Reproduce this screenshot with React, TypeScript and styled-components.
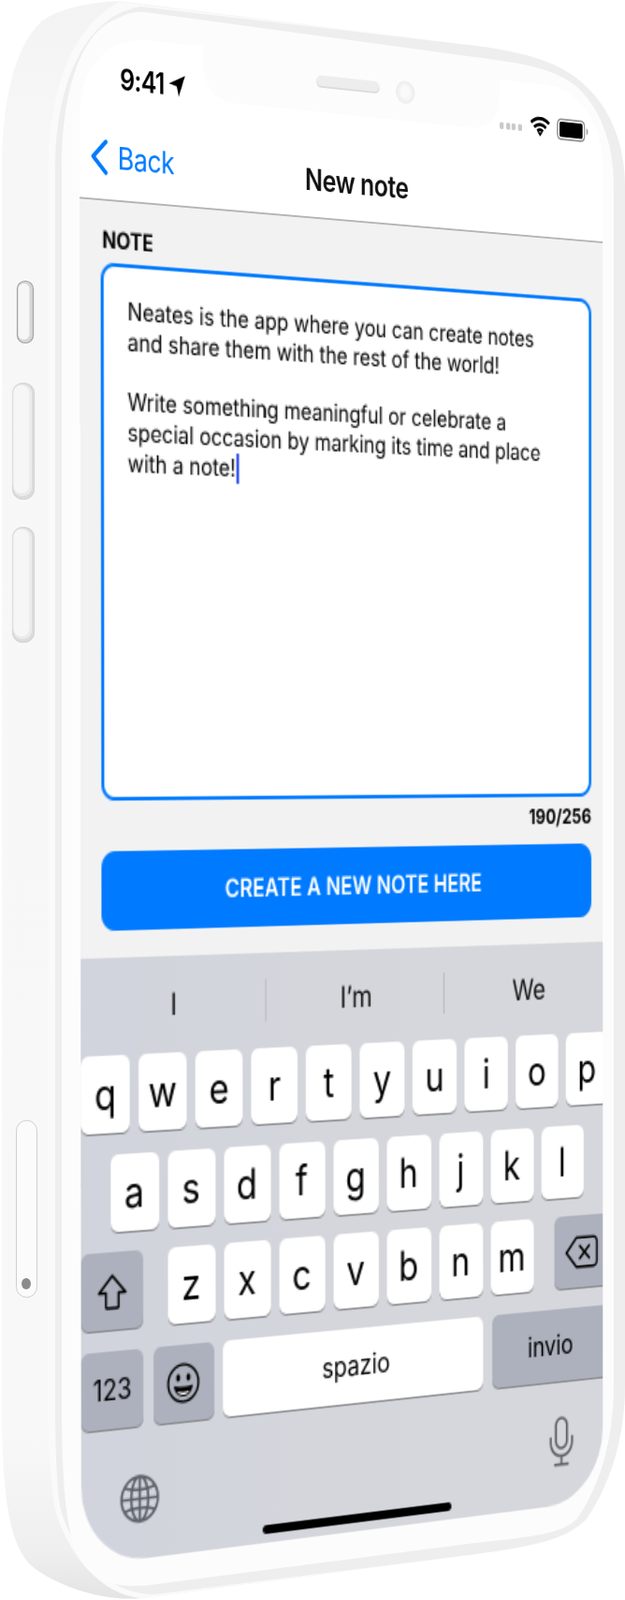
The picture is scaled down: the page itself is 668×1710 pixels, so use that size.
import styled, { createGlobalStyle } from 'styled-components';

type Point = [number, number];

const SCREEN_W = 379.5;
const SCREEN_H = 844;

// square-to-quad homography, gives the tilt of the flat screen in the picture
function quadMatrix(w: number, h: number, [p0, p1, p2, p3]: Point[]) {
  const dx1 = p1[0] - p2[0];
  const dx2 = p3[0] - p2[0];
  const sx = p0[0] - p1[0] + p2[0] - p3[0];
  const dy1 = p1[1] - p2[1];
  const dy2 = p3[1] - p2[1];
  const sy = p0[1] - p1[1] + p2[1] - p3[1];
  const den = dx1 * dy2 - dx2 * dy1;
  const g = (sx * dy2 - dx2 * sy) / den;
  const k = (dx1 * sy - sx * dy1) / den;
  const a = p1[0] - p0[0] + g * p1[0];
  const b = p3[0] - p0[0] + k * p3[0];
  const d = p1[1] - p0[1] + g * p1[1];
  const e = p3[1] - p0[1] + k * p3[1];
  const m = [a / w, d / w, 0, g / w, b / h, e / h, 0, k / h, 0, 0, 1, 0, p0[0], p0[1], 0, 1];
  return `matrix3d(${m.map((n) => n.toFixed(8)).join(',')})`;
}

const screenTilt = quadMatrix(SCREEN_W, SCREEN_H, [
  [85, 35],
  [643.5, 97],
  [643.5, 1603],
  [87, 1674],
]);

const GlobalStyle = createGlobalStyle`
  html, body {
    margin: 0;
    padding: 0;
    background: #fff;
  }
  body {
    font-family: Inter, "Liberation Sans", sans-serif;
    color: #000;
  }
`;

const Stage = styled.div`
  position: relative;
  width: 668px;
  height: 1710px;
  overflow: hidden;
`;

const Shell = styled.svg`
  position: absolute;
  top: 0;
  left: 0;
`;

const Screen = styled.div`
  position: absolute;
  top: 0;
  left: 0;
  width: ${SCREEN_W}px;
  height: ${SCREEN_H}px;
  overflow: hidden;
  border-radius: 44px;
  background: #fff;
  transform-origin: 0 0;
  transform: ${screenTilt};
`;

const AppFrame = styled.div`
  position: relative;
  display: flex;
  flex-direction: column;
  width: 390px;
  height: 844px;
  margin-left: -3px;
  background: #f2f2f2;
`;

const Notch = styled.div`
  position: absolute;
  top: 0;
  left: 87px;
  width: 216px;
  height: 30px;
  background: #fcfcfc;
  border-radius: 0 0 20px 20px;
`;

const Speaker = styled.div`
  position: absolute;
  top: 9px;
  left: 80px;
  width: 46px;
  height: 6.5px;
  border-radius: 4px;
  background: #ededed;
  box-shadow: inset 0 -1px 0 #dcdcdc;
`;

const Camera = styled.div`
  position: absolute;
  top: 7px;
  left: 138px;
  width: 14px;
  height: 13px;
  border-radius: 50%;
  background: radial-gradient(circle, #fafafa 0 30%, #ececec 70%);
`;

const StatusBar = styled.div`
  display: flex;
  justify-content: space-between;
  align-items: center;
  height: 47px;
  padding: 0 18.5px 0 30px;
  background: #fff;
  box-sizing: border-box;
`;

const Time = styled.div`
  display: flex;
  align-items: center;
  gap: 3px;
  margin-top: -1px;
  font-size: 16px;
  font-weight: 600;
  letter-spacing: -0.5px;
`;

const StatusIcons = styled.div`
  display: flex;
  align-items: center;
  gap: 5px;
  margin-top: 3px;
`;

const Dots = styled.div`
  display: flex;
  gap: 1.5px;
  margin: 3px 1px 0 0;
  span {
    width: 3px;
    height: 4px;
    border-radius: 1px;
    background: #c9c9c9;
  }
`;

const NavBar = styled.div`
  position: relative;
  display: flex;
  align-items: center;
  justify-content: center;
  height: 44px;
  padding: 0 0 0 3px;
  background: #fff;
  border-bottom: 1px solid #b4b4b6;
  box-sizing: border-box;
`;

const BackLink = styled.div`
  position: absolute;
  top: 10px;
  left: 9.5px;
  display: flex;
  align-items: center;
  gap: 7px;
  color: #007aff;
  font-size: 17px;
  letter-spacing: -0.3px;
`;

const Title = styled.div`
  font-size: 17px;
  font-weight: 600;
  letter-spacing: -0.3px;
  color: #111;
`;

const Form = styled.div`
  display: flex;
  flex-direction: column;
  padding: 15px 16px 0 17px;
  height: 417.5px;
  box-sizing: border-box;
`;

const Label = styled.div`
  padding-left: 1px;
  font-size: 12.5px;
  line-height: 14px;
  font-weight: 700;
  margin-bottom: 5px;
`;

const NoteBox = styled.div`
  height: 297px;
  padding: 16px 16px;
  border: 2px solid #007aff;
  border-radius: 9px;
  background: #fff;
  box-sizing: border-box;
  font-size: 13.6px;
  line-height: 16.8px;
  white-space: nowrap;
  color: #000;
`;

const Caret = styled.span`
  display: inline-block;
  width: 2px;
  height: 17px;
  vertical-align: -4px;
  background: #3d5cf0;
`;

const Counter = styled.div`
  align-self: flex-end;
  margin-top: 5px;
  font-size: 12px;
  line-height: 14px;
  font-weight: 700;
  color: #000;
`;

const CreateButton = styled.div`
  display: flex;
  align-items: center;
  justify-content: center;
  height: 44px;
  margin-top: 8.5px;
  border-radius: 9px;
  background: #007aff;
  color: #fff;
  font-size: 14px;
  font-weight: 600;
`;

const Keyboard = styled.div`
  display: flex;
  flex-direction: column;
  flex: 1;
  background: linear-gradient(90deg, #d1d4dc, #d6d7dc 60%);
`;

const Suggestions = styled.div`
  display: grid;
  grid-template-columns: repeat(3, 1fr);
  align-items: center;
  height: 52px;
  margin-bottom: 2.5px;
  padding: 2px 0 0 2px;
  box-sizing: border-box;
`;

const Suggestion = styled.div<{ $divider?: boolean }>`
  display: flex;
  align-items: center;
  justify-content: center;
  height: 24px;
  font-size: 17px;
  color: #111;
  border-right: ${(p) => (p.$divider ? '1px solid #bdbec4' : 'none')};
`;

const KeyRow = styled.div<{ $spread?: boolean }>`
  display: flex;
  justify-content: ${(p) => (p.$spread ? 'space-between' : 'center')};
  gap: 6px;
  height: 43px;
  margin-bottom: 11.5px;
  padding: 0 3px;
`;

const Key = styled.div<{ $w?: number; $dark?: boolean; $size?: number }>`
  display: flex;
  align-items: center;
  justify-content: center;
  flex: none;
  width: ${(p) => p.$w ?? 33}px;
  border-radius: 5px;
  background: ${(p) => (p.$dark ? '#adb1bd' : '#fff')};
  box-shadow: 0 1px 0 #898a8d;
  font-size: ${(p) => p.$size ?? 24}px;
  color: #000;
`;

const LetterGroup = styled.div`
  display: flex;
  gap: 6px;
`;

const KeyboardFoot = styled.div`
  display: flex;
  justify-content: space-between;
  align-items: flex-start;
  padding: 15.5px 30px 0 29px;
`;

const MicSlot = styled.div`
  margin-top: -6px;
`;

const HomeBar = styled.div`
  position: absolute;
  bottom: 5px;
  left: 128px;
  width: 138px;
  height: 5px;
  border-radius: 3px;
  background: #000;
`;

function ChevronBack() {
  return (
    <svg width="12" height="20" viewBox="0 0 12 20" fill="none" stroke="#007aff" strokeWidth="2.4" strokeLinecap="round" strokeLinejoin="round">
      <path d="M10.5 1.5 2 10l8.5 8.5" />
    </svg>
  );
}

function LocationArrow() {
  return (
    <svg width="12" height="13" viewBox="0 0 11 12" fill="#000">
      <path d="M10.6.6 6.6 11.6 5.4 6.3.4 5.2z" />
    </svg>
  );
}

function Wifi() {
  return (
    <svg width="16" height="12" viewBox="0 0 16 12" fill="none" stroke="#000" strokeWidth="1.9">
      <path d="M1 4.2c4-3.6 10-3.6 14 0M3.4 6.8c2.7-2.3 6.5-2.3 9.2 0M5.8 9c1.3-1 3.1-1 4.4 0" />
      <path d="m8 12-2-2.4h4z" fill="#000" stroke="none" />
    </svg>
  );
}

function Battery() {
  return (
    <svg width="25" height="13" viewBox="0 0 25 13">
      <rect x="0.6" y="0.6" width="21" height="11.8" rx="2.6" fill="none" stroke="#8c8c8c" strokeWidth="1" />
      <rect x="2" y="2" width="18.2" height="9" rx="1.4" fill="#000" />
      <path d="M23 4.5c1 .3 1.4 1 1.4 2s-.4 1.7-1.4 2z" fill="#a8a8a8" />
    </svg>
  );
}

function ShiftIcon() {
  return (
    <svg width="22" height="22" viewBox="0 0 22 22" fill="none" stroke="#000" strokeWidth="1.4" strokeLinejoin="round">
      <path d="M11 2 2 11.5h4.7V19c0 .6.3 1 1 1h6.6c.7 0 1-.4 1-1v-7.5H20z" />
    </svg>
  );
}

function BackspaceIcon() {
  return (
    <svg width="27" height="20" viewBox="0 0 25 19" fill="none" stroke="#000" strokeWidth="1.4" strokeLinejoin="round" strokeLinecap="round">
      <path d="M8.5 1.2H21c1.6 0 2.8 1.2 2.8 2.8v11c0 1.6-1.2 2.8-2.8 2.8H8.5L1 9.5z" />
      <path d="m11 6 7 7M18 6l-7 7" />
    </svg>
  );
}

function EmojiIcon() {
  return (
    <svg width="23" height="23" viewBox="0 0 26 26" fill="none" stroke="#000" strokeWidth="1.5">
      <circle cx="13" cy="13" r="11.8" />
      <ellipse cx="9" cy="9.5" rx="1.5" ry="2.3" fill="#000" stroke="none" />
      <ellipse cx="17" cy="9.5" rx="1.5" ry="2.3" fill="#000" stroke="none" />
      <path d="M5.6 14.4c4.6 1.2 10.2 1.2 14.8 0-.5 4.4-3.5 7-7.4 7s-6.9-2.6-7.4-7z" fill="#000" stroke="none" />
      <path d="M8.2 18c3 1 6.6 1 9.6 0-1 1.6-2.8 2.4-4.8 2.4S9.2 19.6 8.2 18z" fill="#fff" stroke="none" />
    </svg>
  );
}

function GlobeIcon() {
  return (
    <svg width="27" height="27" viewBox="0 0 27 27" fill="none" stroke="#5c6168" strokeWidth="1.6">
      <circle cx="13.5" cy="13.5" r="12.4" />
      <ellipse cx="13.5" cy="13.5" rx="5.8" ry="12.4" />
      <path d="M13.5 1v25M1.1 13.5h24.8M3 6.8c6 2.2 15 2.2 21 0M3 20.2c6-2.2 15-2.2 21 0" />
    </svg>
  );
}

function MicIcon() {
  return (
    <svg width="19" height="30" viewBox="0 0 19 30" fill="none" stroke="#5c6168" strokeWidth="1.6" strokeLinecap="round">
      <rect x="5.2" y="1" width="8.6" height="18" rx="4.3" />
      <path d="M1.2 12.5v2.8c0 4.8 3.6 8.3 8.3 8.3s8.3-3.5 8.3-8.3v-2.8M9.5 23.6v4.8M4.500 28.700h10" />
    </svg>
  );
}

function PhoneShell() {
  return (
    <Shell width="668" height="1710" viewBox="0 0 668 1710">
      <defs>
        <linearGradient id="side" x1="0" y1="0" x2="0" y2="1">
          <stop offset="0" stopColor="#f3f3f3" />
          <stop offset="0.08" stopColor="#f7f7f7" />
          <stop offset="0.9" stopColor="#f8f8f8" />
          <stop offset="0.97" stopColor="#efefef" />
          <stop offset="1" stopColor="#e4e4e4" />
        </linearGradient>
      </defs>
      <path
        d="M127 1 500 48C560 55 600 66 627 93 650 115 668 150 668 200V1480C668 1540 650 1590 627 1623 607 1645 570 1653 500 1662L150 1708C110 1712 60 1695 33 1673 10 1650 2 1600 2 1500V180C2 110 15 50 45 22 70 6 100 3 127 1Z"
        fill="url(#side)"
      />
      <path
        d="M127 2 500 48C560 55 600 66 627 93 650 115 668 150 668 200V1480C668 1540 650 1590 627 1623 607 1645 570 1653 500 1662L150 1708C108 1704 72 1662 58 1610 54 1580 52 1540 52 1500V180C52 100 75 30 127 2Z"
        fill="#fafafa"
      />
      <path
        d="M150 7 500 48C560 55 600 66 627 93 650 115 668 150 668 200V1480C668 1540 650 1590 627 1623 607 1645 570 1653 500 1662L165 1704C115 1704 78 1662 64 1610 60 1580 59 1540 59 1500V180C59 100 85 18 150 7Z"
        fill="#eeeeee"
      />
      <path
        d="M155 13 500 60C560 68 590 72 617 93 640 115 656 150 656 200V1480C656 1540 640 1590 617 1623 600 1640 570 1642 500 1650L160 1694C120 1698 102 1688 90 1673 72 1650 66 1600 66 1500V180C66 100 85 35 125 20 135 14 145 12 155 13Z"
        fill="#fcfcfc"
      />
      <rect x="18.5" y="300.5" width="17" height="66" rx="8" fill="#d6d6d6" stroke="#a3a3a3" strokeWidth="1.2" />
      <rect x="19.5" y="303" width="12" height="60" rx="6" fill="#f6f6f6" />
      <rect x="13.5" y="409.5" width="23" height="124" rx="11" fill="#dcdcdc" stroke="#d6d6d6" strokeWidth="1.2" />
      <rect x="14" y="411" width="20" height="119" rx="9" fill="#ececec" />
      <rect x="14" y="411" width="18" height="117" rx="9" fill="#f6f6f6" stroke="#e6e6e6" />
      <rect x="13.5" y="563.5" width="23" height="123" rx="11" fill="#dcdcdc" stroke="#d6d6d6" strokeWidth="1.2" />
      <rect x="14" y="565" width="20" height="118" rx="9" fill="#ececec" />
      <rect x="14" y="565" width="18" height="116" rx="9" fill="#f6f6f6" stroke="#e6e6e6" />
      <rect x="17.5" y="1197.5" width="22" height="189" rx="11" fill="#fbfbfb" stroke="#cfcfcf" />
      <ellipse cx="28" cy="1372" rx="5" ry="6" fill="#8b8b8b" />
    </Shell>
  );
}

const rowOne = ['q', 'w', 'e', 'r', 't', 'y', 'u', 'i', 'o', 'p'];
const rowTwo = ['a', 's', 'd', 'f', 'g', 'h', 'j', 'k', 'l'];
const rowThree = ['z', 'x', 'c', 'v', 'b', 'n', 'm'];

export default function App() {
  return (
    <Stage>
      <GlobalStyle />
      <PhoneShell />
      <Screen>
        <AppFrame>
          <StatusBar>
            <Time>
              9:41
              <LocationArrow />
            </Time>
            <StatusIcons>
              <Dots>
                <span />
                <span />
                <span />
                <span />
              </Dots>
              <Wifi />
              <Battery />
            </StatusIcons>
          </StatusBar>
          <Notch>
            <Speaker />
            <Camera />
          </Notch>
          <NavBar>
            <BackLink>
              <ChevronBack />
              Back
            </BackLink>
            <Title>New note</Title>
          </NavBar>
          <Form>
            <Label>NOTE</Label>
            <NoteBox>
              Neates is the app where you can create notes
              <br />
              and share them with the rest of the world!
              <br />
              <br />
              Write something meaningful or celebrate a
              <br />
              special occasion by marking its time and place
              <br />
              with a note!
              <Caret />
            </NoteBox>
            <Counter>190/256</Counter>
            <CreateButton>CREATE A NEW NOTE HERE</CreateButton>
          </Form>
          <Keyboard>
            <Suggestions>
              <Suggestion $divider>I</Suggestion>
              <Suggestion $divider>I’m</Suggestion>
              <Suggestion>We</Suggestion>
            </Suggestions>
            <KeyRow>
              {rowOne.map((k) => (
                <Key key={k}>{k}</Key>
              ))}
            </KeyRow>
            <KeyRow>
              {rowTwo.map((k) => (
                <Key key={k}>{k}</Key>
              ))}
            </KeyRow>
            <KeyRow $spread>
              <Key $w={42} $dark>
                <ShiftIcon />
              </Key>
              <LetterGroup>
                {rowThree.map((k) => (
                  <Key key={k}>{k}</Key>
                ))}
              </LetterGroup>
              <Key $w={42} $dark>
                <BackspaceIcon />
              </Key>
            </KeyRow>
            <KeyRow $spread>
              <Key $w={42} $dark $size={16}>
                123
              </Key>
              <Key $w={42} $dark>
                <EmojiIcon />
              </Key>
              <Key $w={190} $size={16}>
                spazio
              </Key>
              <Key $w={90} $dark $size={16}>
                invio
              </Key>
            </KeyRow>
            <KeyboardFoot>
              <GlobeIcon />
              <MicSlot>
                <MicIcon />
              </MicSlot>
            </KeyboardFoot>
          </Keyboard>
          <HomeBar />
        </AppFrame>
      </Screen>
    </Stage>
  );
}
